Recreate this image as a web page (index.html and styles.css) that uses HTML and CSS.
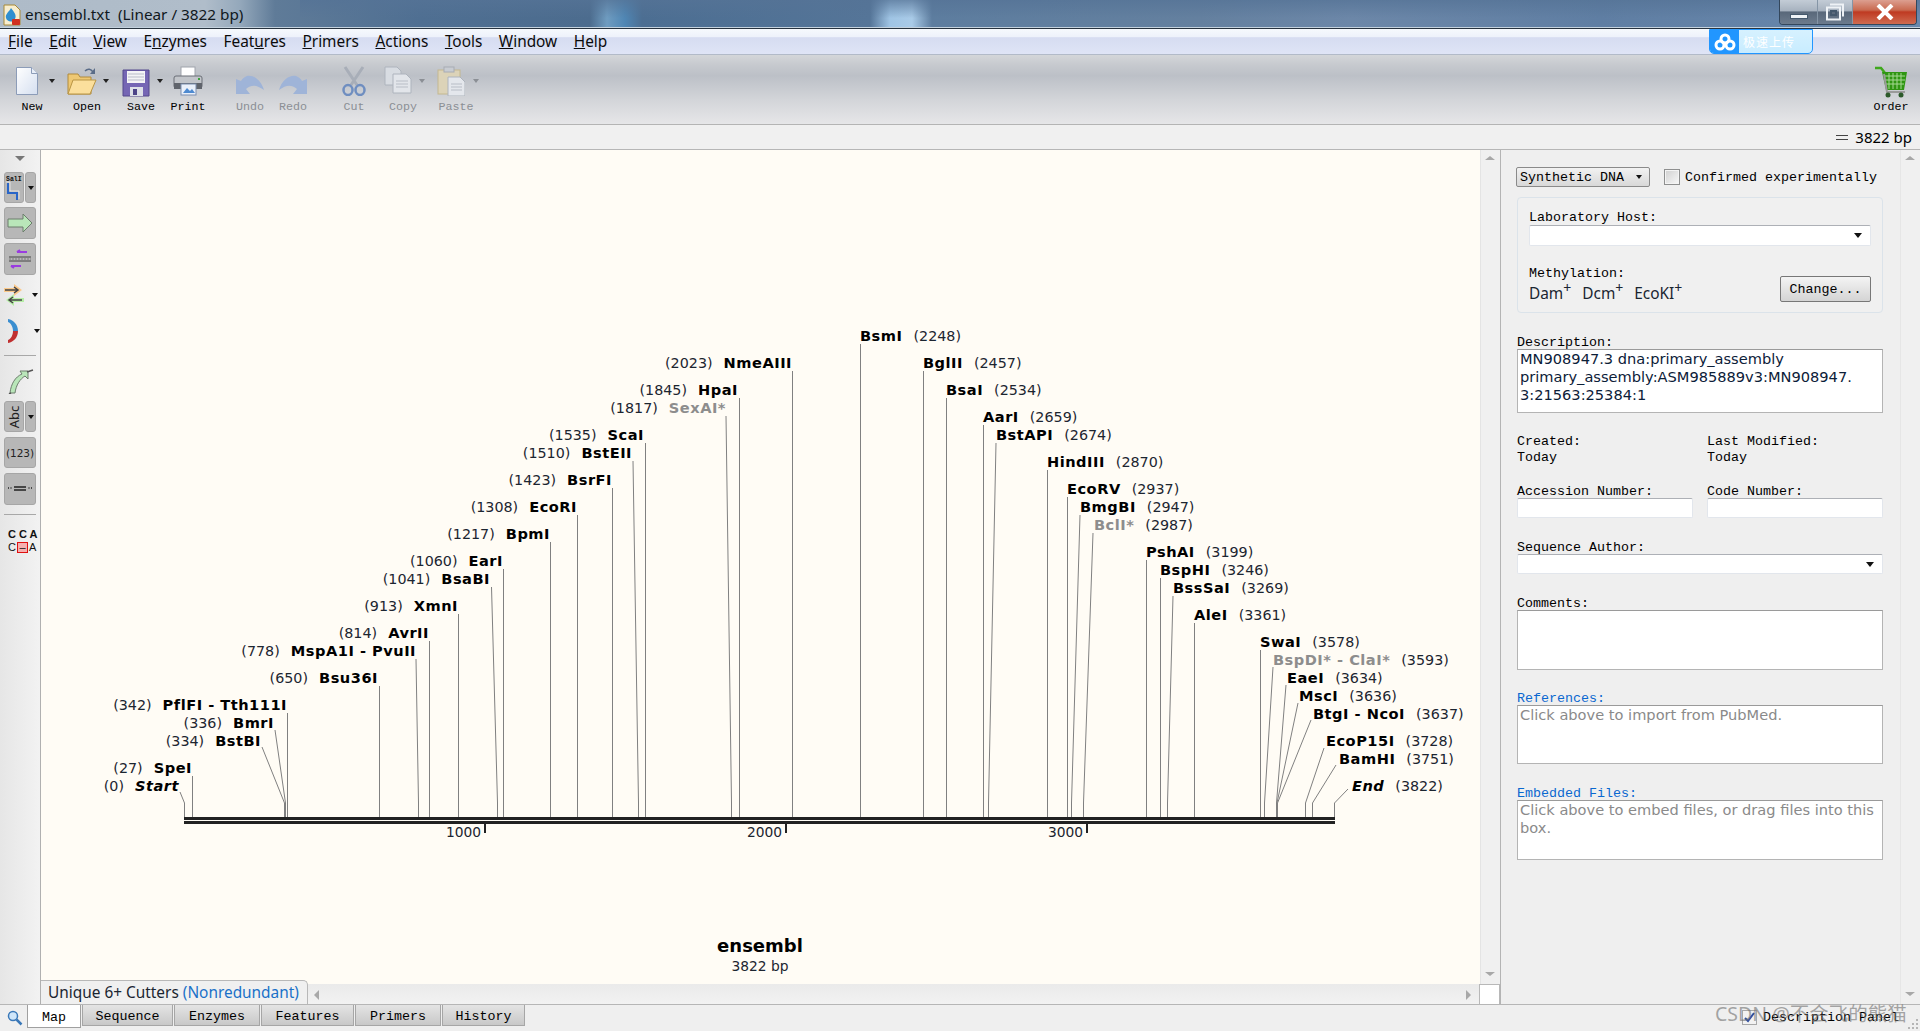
FILE: index.html
```html
<!DOCTYPE html>
<html lang="en">
<head>
<meta charset="utf-8">
<title>ensembl.txt</title>
<link rel="stylesheet" href="styles.css">
</head>
<body>
<div class="app">
  <header class="titlebar">
    <svg class="appicon" width="18" height="22" viewBox="0 0 18 22"><path d="M1 1h11l5 5v15H1z" fill="#f8eecf" stroke="#a88a38"/><path d="M8 4c3 4 6 7 4 11s-8 3-9-1 3-6 5-10z" fill="#2f8fd0"/><rect x="9" y="15" width="8" height="6" rx="1" fill="#d03020"/></svg>
    <span class="titletext">ensembl.txt&nbsp; (Linear / 3822 bp)</span>
    <div class="winbtns">
      <div class="winbtn winmin"><span class="minbar"></span></div>
      <div class="winbtn winmax"><svg width="20" height="18" viewBox="0 0 20 18"><path d="M5 1.500h13v12M2 4.500h13v12H2z" fill="none" stroke="#eef2f6" stroke-width="2"/><rect x="6" y="8" width="5" height="4" fill="none" stroke="#44586c" stroke-width="2"/></svg></div>
      <div class="winbtn winclose"><svg width="20" height="16" viewBox="0 0 20 16"><path d="M3 1l14 14M17 1L3 15" stroke="#fff" stroke-width="4"/></svg></div>
    </div>
  </header>

  <nav class="menubar">
    <span class="mi"><u>F</u>ile</span><span class="mi"><u>E</u>dit</span><span class="mi"><u>V</u>iew</span><span class="mi">E<u>n</u>zymes</span><span class="mi">Feat<u>u</u>res</span><span class="mi"><u>P</u>rimers</span><span class="mi"><u>A</u>ctions</span><span class="mi"><u>T</u>ools</span><span class="mi"><u>W</u>indow</span><span class="mi"><u>H</u>elp</span>
    <div class="cloudwidget">
      <span class="cloudicon"><svg width="22" height="18" viewBox="0 0 22 18"><g fill="none" stroke="#fff" stroke-width="3"><circle cx="11" cy="6" r="4"/><circle cx="6" cy="12" r="4"/><circle cx="16" cy="12" r="4"/></g></svg></span>
      <span class="cloudtext">极速上传</span>
    </div>
  </nav>

  <div class="toolbar">
    <div class="tool t48 car"><svg width="24" height="30" viewBox="0 0 24 30"><defs><linearGradient id="pg" x1="0" y1="0" x2="1" y2="1"><stop offset="0" stop-color="#fff"/><stop offset="1" stop-color="#d5dff0"/></linearGradient></defs><path d="M1.500 1.500h15l6 6v21h-21z" fill="url(#pg)" stroke="#8c9cb8"/><path d="M16.500 1.500v6h6" fill="#e8eef8" stroke="#8c9cb8"/></svg><span>New</span><i class="caret"></i></div>
    <div class="tool t46 ml8 car"><svg width="30" height="30" viewBox="0 0 30 30"><path d="M1 8h10l2 3h11v17H1z" fill="#eec873" stroke="#b08a3c"/><path d="M6 14h23l-6 14H1z" fill="#fbdf9c" stroke="#b99544"/><path d="M18 5c3-3 6-2 8 1" fill="none" stroke="#5a6c88" stroke-width="1.500"/><path d="M28 2v6h-5z" fill="#5a6c88"/></svg><span>Open</span><i class="caret"></i></div>
    <div class="tool t46 ml8 car"><svg class="i14" width="28" height="28" viewBox="0 0 28 28"><path d="M1 1h26v26H1z" fill="#7566b4" stroke="#54488c"/><rect x="5" y="2" width="18" height="12" fill="#f4f4f6"/><path d="M6 5h16M6 8h16M6 11h16" stroke="#b9bdc9"/><rect x="8" y="18" width="13" height="9" fill="#dde0e8"/><rect x="11" y="20" width="4" height="6" fill="#4c4488"/></svg><span>Save</span><i class="caret"></i></div>
    <div class="tool t48"><svg width="30" height="30" viewBox="0 0 30 30"><rect x="8" y="1" width="14" height="10" fill="#fff" stroke="#a0a4ac"/><rect x="1" y="10" width="28" height="12" rx="2" fill="#c2c5ca" stroke="#6a6e76"/><rect x="1" y="17" width="28" height="6" fill="#60646c"/><rect x="8" y="18" width="15" height="11" fill="#eaf0fa" stroke="#7c8fb0"/><path d="M10 27l4-5 3 3 2-2 3 4z" fill="#4e8ad0"/><rect x="25" y="12" width="2" height="2" fill="#3fa040"/></svg><span>Print</span></div>
    <div class="tool t42 ml17 off"><svg class="i18" width="30" height="22" viewBox="0 0 30 22"><path d="M1 6v15h14l-4-5c6-5 11-4 18 1C26 7 19 2 12 3 9 4 7 6 6 8z" fill="#9fb4d8"/></svg><span>Undo</span></div>
    <div class="tool t42 ml1 off"><svg class="i18" width="30" height="22" viewBox="0 0 30 22"><path d="M29 6v15H15l4-5C13 11 8 12 1 17 4 7 11 2 18 3c3 1 5 3 6 5z" fill="#9fb4d8"/></svg><span>Redo</span></div>
    <div class="tool t42 ml19 off"><svg width="24" height="30" viewBox="0 0 24 30"><path d="M3 1l12 18M21 1L9 19" stroke="#a8aeb8" stroke-width="3"/><g fill="none" stroke="#6f8ec0" stroke-width="2.500"><ellipse cx="6" cy="24" rx="4.500" ry="5"/><ellipse cx="18" cy="24" rx="4.500" ry="5"/></g></svg><span>Cut</span></div>
    <div class="tool t46 ml5 off car"><svg width="28" height="28" viewBox="0 0 28 28"><path d="M1 1h12l4 4v14H1z" fill="#d8dce2" stroke="#aeb4bd"/><path d="M9 8h13l5 5v14H9z" fill="#e2e5ea" stroke="#aeb4bd"/><path d="M12 15h12M12 18h12M12 21h12" stroke="#b8bdc6"/></svg><span>Copy</span><i class="caret grey"></i></div>
    <div class="tool t48 ml6 off car"><svg width="28" height="30" viewBox="0 0 28 30"><rect x="1" y="4" width="22" height="24" fill="#dcd3b8" stroke="#c4b890"/><rect x="7" y="1" width="10" height="5" fill="#c8ccd2" stroke="#a8acb4"/><path d="M11 11h12l5 5v14H11z" fill="#e4e7ec" stroke="#aeb4bd"/><path d="M14 18h11M14 21h11M14 24h11" stroke="#b8bdc6"/></svg><span>Paste</span><i class="caret grey"></i></div>
    <div class="tool t42 right"><svg width="34" height="32" viewBox="0 0 34 32"><path d="M1 2h6l4 5" fill="none" stroke="#3fa81c" stroke-width="2.500"/><path d="M8 6h25l-3 18H12z" fill="#2f9612"/><path d="M11 10h20M11 14h20M12 18h18M15 7v16M19 7v16M23 7v16M27 7v16" stroke="#a7d894"/><path d="M10 8l3 18h18" fill="none" stroke="#9a9a9a" stroke-width="2"/><circle cx="14" cy="29" r="2.500" fill="#2c5a2a"/><circle cx="27" cy="29" r="2.500" fill="#2c5a2a"/></svg><span>Order</span></div>
  </div>

  <div class="statusrow"><span class="eqicon"></span><span>3822 bp</span></div>

  <main class="main">
    <aside class="leftbar">
      <i class="lefttri"></i>
      <div class="lrow lr1">
        <div class="lbtn lw20 lh31"><svg width="18" height="27" viewBox="0 0 18 27"><text x="1" y="7" class="salt">SalI</text><path d="M3 9v10h9v7" fill="none" stroke="#2a66c8" stroke-width="2"/><path d="M1 8h4v9h9v8" fill="none" stroke="#fff" stroke-width=".6"/></svg></div>
        <div class="lbtn lw11 lh31"><i class="mini"></i></div>
      </div>
      <div class="lbtn lw32 lh32 mt4"><svg width="26" height="20" viewBox="0 0 26 20"><path d="M1 6h15V1l9 9-9 9v-5H1z" fill="#b9e6b9" stroke="#6c7c6c"/></svg></div>
      <div class="lbtn lw32 lh32 mt4"><svg width="24" height="24" viewBox="0 0 24 24"><path d="M1 10h22M1 14h22" stroke="#444"/><path d="M1 12h22" stroke="#999" stroke-dasharray="2 1" stroke-width="2"/><path d="M9 5h10M9 5l3-2M3 19h10M3 19l3 2" stroke="#9a3ce0" stroke-width="2" fill="none"/></svg></div>
      <div class="lrow lr2"><svg width="20" height="23" viewBox="0 0 20 23"><path d="M0 5h10V1l8 6-8 6V9H0z" fill="#fbc98a"/><path d="M1 7h12M10 4l4 3-4 3" fill="none" stroke="#444" stroke-width="1.500"/><path d="M20 15H10v-4l-8 6 8 6v-4h10z" fill="#b6eea6"/><path d="M18 17H6M9 14l-4 3 4 3" fill="none" stroke="#444" stroke-width="1.500"/></svg><i class="mini"></i></div>
      <div class="lrow lr3"><svg width="20" height="24" viewBox="0 0 20 24"><path d="M2 0c6 1 10 6 10 12H7C7 8 5 4 2 3z" fill="#3a8ed0"/><path d="M12 12c0 6-4 11-10 12v-3c3-1 5-5 5-9z" fill="#c03030"/></svg><i class="mini"></i></div>
      <hr class="lsep mt12">
      <svg class="featarrow" width="26" height="25" viewBox="0 0 26 25"><path d="M2 24C3 15 7 8 14 5l-2-3 8 0 0 8-3-3C12 10 8 16 7 24z" fill="#b9e6b9" stroke="#6c7c6c"/><path d="M19 3l6-2M1 25l2-1" stroke="#555" stroke-width="1.500"/></svg>
      <div class="lrow lr4">
        <div class="lbtn lw20 lh31"><span class="vtext">Abc</span></div>
        <div class="lbtn lw11 lh31"><i class="mini"></i></div>
      </div>
      <div class="lbtn lw32 lh31 mt5 num">(123)</div>
      <div class="lbtn lw32 lh32 mt5"><svg width="26" height="8" viewBox="0 0 26 8"><path d="M7 2h12M7 5h12M1 3h1M3.500 3h1M21.500 3h1M24 3h1" stroke="#222" stroke-width="1.500"/></svg></div>
      <hr class="lsep mt9">
      <div class="cca"><b>C C A</b><span class="cca2">C<em>–</em>A</span></div>
    </aside>

    <section class="mapwrap">
      <div class="mapcol">
        <div class="maprow">
          <div class="canvas">
            <svg class="mapsvg" width="1439" height="834" viewBox="41 150 1439 834">
              <g class="ln">
                <path d="M180 792L184.500 803V817"/>
                <path d="M192.500 776V817"/>
                <path d="M262 747L284.500 803V817"/>
                <path d="M275 730L285.500 803V817"/>
                <path d="M287.500 713V817"/>
                <path d="M379.500 686V817"/>
                <path d="M416 659L418.500 803V817"/>
                <path d="M429.500 641V817"/>
                <path d="M458.500 614V817"/>
                <path d="M491.500 587L497.500 803V817"/>
                <path d="M503.500 569V817"/>
                <path d="M550.500 542V817"/>
                <path d="M577.500 515V817"/>
                <path d="M612.500 488V817"/>
                <path d="M633 461L638.500 803V817"/>
                <path d="M645.500 443V817"/>
                <path d="M726 416L731.500 803V817"/>
                <path d="M739.500 398V817"/>
                <path d="M792.500 371V817"/>
                <path d="M860.500 344V817"/>
                <path d="M923.500 371V817"/>
                <path d="M946.500 398V817"/>
                <path d="M983.500 425V817"/>
                <path d="M996 443L988.500 803V817"/>
                <path d="M1047.500 470V817"/>
                <path d="M1067.500 497V817"/>
                <path d="M1080 515L1071.500 803V817"/>
                <path d="M1093 533L1083.500 803V817"/>
                <path d="M1146.500 560V817"/>
                <path d="M1160.500 578V817"/>
                <path d="M1173 596L1167.500 803V817"/>
                <path d="M1194.500 623V817"/>
                <path d="M1260.500 650V817"/>
                <path d="M1273 667L1264.500 803V817"/>
                <path d="M1286 685L1276.500 803V817"/>
                <path d="M1298 703L1277 803V817"/>
                <path d="M1311 720L1277.500 803V817"/>
                <path d="M1324 748L1305.500 803V817"/>
                <path d="M1336 765L1312.500 803V817"/>
                <path d="M1348 789L1334.500 803V817"/>
              </g>
              <rect class="bb" x="184" y="817" width="1151" height="3"/>
              <rect class="bb" x="184" y="821" width="1151" height="3"/>
              <rect class="bb" x="484" y="824" width="2" height="9"/>
              <rect class="bb" x="785" y="824" width="2" height="9"/>
              <rect class="bb" x="1086" y="824" width="2" height="9"/>
              <text class="num tick" x="481" y="837" text-anchor="end">1000</text>
              <text class="num tick" x="782" y="837" text-anchor="end">2000</text>
              <text class="num tick" x="1083" y="837" text-anchor="end">3000</text>

              <text class="num" x="179" y="791" text-anchor="end">(0)<tspan class="it" dx="11">Start</tspan></text>
              <text class="num" x="192" y="773" text-anchor="end">(27)<tspan class="nm" dx="11">SpeI</tspan></text>
              <text class="num" x="261" y="746" text-anchor="end">(334)<tspan class="nm" dx="11">BstBI</tspan></text>
              <text class="num" x="274" y="728" text-anchor="end">(336)<tspan class="nm" dx="11">BmrI</tspan></text>
              <text class="num" x="287" y="710" text-anchor="end">(342)<tspan class="nm" dx="11">PflFI - Tth111I</tspan></text>
              <text class="num" x="378" y="683" text-anchor="end">(650)<tspan class="nm" dx="11">Bsu36I</tspan></text>
              <text class="num" x="416" y="656" text-anchor="end">(778)<tspan class="nm" dx="11">MspA1I - PvuII</tspan></text>
              <text class="num" x="429" y="638" text-anchor="end">(814)<tspan class="nm" dx="11">AvrII</tspan></text>
              <text class="num" x="458" y="611" text-anchor="end">(913)<tspan class="nm" dx="11">XmnI</tspan></text>
              <text class="num" x="490" y="584" text-anchor="end">(1041)<tspan class="nm" dx="11">BsaBI</tspan></text>
              <text class="num" x="503" y="566" text-anchor="end">(1060)<tspan class="nm" dx="11">EarI</tspan></text>
              <text class="num" x="550" y="539" text-anchor="end">(1217)<tspan class="nm" dx="11">BpmI</tspan></text>
              <text class="num" x="577" y="512" text-anchor="end">(1308)<tspan class="nm" dx="11">EcoRI</tspan></text>
              <text class="num" x="612" y="485" text-anchor="end">(1423)<tspan class="nm" dx="11">BsrFI</tspan></text>
              <text class="num" x="632" y="458" text-anchor="end">(1510)<tspan class="nm" dx="11">BstEII</tspan></text>
              <text class="num" x="644" y="440" text-anchor="end">(1535)<tspan class="nm" dx="11">ScaI</tspan></text>
              <text class="num" x="726" y="413" text-anchor="end">(1817)<tspan class="nm dim" dx="11">SexAI*</tspan></text>
              <text class="num" x="738" y="395" text-anchor="end">(1845)<tspan class="nm" dx="11">HpaI</tspan></text>
              <text class="num" x="792" y="368" text-anchor="end">(2023)<tspan class="nm" dx="11">NmeAIII</tspan></text>

              <text class="num" x="860" y="341"><tspan class="nm">BsmI</tspan><tspan dx="11">(2248)</tspan></text>
              <text class="num" x="923" y="368"><tspan class="nm">BglII</tspan><tspan dx="11">(2457)</tspan></text>
              <text class="num" x="946" y="395"><tspan class="nm">BsaI</tspan><tspan dx="11">(2534)</tspan></text>
              <text class="num" x="983" y="422"><tspan class="nm">AarI</tspan><tspan dx="11">(2659)</tspan></text>
              <text class="num" x="996" y="440"><tspan class="nm">BstAPI</tspan><tspan dx="11">(2674)</tspan></text>
              <text class="num" x="1047" y="467"><tspan class="nm">HindIII</tspan><tspan dx="11">(2870)</tspan></text>
              <text class="num" x="1067" y="494"><tspan class="nm">EcoRV</tspan><tspan dx="11">(2937)</tspan></text>
              <text class="num" x="1080" y="512"><tspan class="nm">BmgBI</tspan><tspan dx="11">(2947)</tspan></text>
              <text class="num" x="1094" y="530"><tspan class="nm dim">BclI*</tspan><tspan dx="11">(2987)</tspan></text>
              <text class="num" x="1146" y="557"><tspan class="nm">PshAI</tspan><tspan dx="11">(3199)</tspan></text>
              <text class="num" x="1160" y="575"><tspan class="nm">BspHI</tspan><tspan dx="11">(3246)</tspan></text>
              <text class="num" x="1173" y="593"><tspan class="nm">BssSaI</tspan><tspan dx="11">(3269)</tspan></text>
              <text class="num" x="1194" y="620"><tspan class="nm">AleI</tspan><tspan dx="11">(3361)</tspan></text>
              <text class="num" x="1260" y="647"><tspan class="nm">SwaI</tspan><tspan dx="11">(3578)</tspan></text>
              <text class="num" x="1273" y="665"><tspan class="nm dim">BspDI* - ClaI*</tspan><tspan dx="11">(3593)</tspan></text>
              <text class="num" x="1287" y="683"><tspan class="nm">EaeI</tspan><tspan dx="11">(3634)</tspan></text>
              <text class="num" x="1299" y="701"><tspan class="nm">MscI</tspan><tspan dx="11">(3636)</tspan></text>
              <text class="num" x="1313" y="719"><tspan class="nm">BtgI - NcoI</tspan><tspan dx="11">(3637)</tspan></text>
              <text class="num" x="1326" y="746"><tspan class="nm">EcoP15I</tspan><tspan dx="11">(3728)</tspan></text>
              <text class="num" x="1339" y="764"><tspan class="nm">BamHI</tspan><tspan dx="11">(3751)</tspan></text>
              <text class="num" x="1352" y="791"><tspan class="it">End</tspan><tspan dx="11">(3822)</tspan></text>

              <text class="ttl" x="760" y="952" text-anchor="middle">ensembl</text>
              <text class="num tick" x="760" y="971" text-anchor="middle">3822 bp</text>
            </svg>
          </div>
          <div class="vscroll"><i class="au"></i><i class="ad"></i></div>
        </div>
        <div class="hrow">
          <div class="enztab">Unique 6+ Cutters <span class="blue">(Nonredundant)</span></div>
          <div class="htrack"><i class="al"></i><i class="ar"></i></div>
          <div class="corner"></div>
        </div>
      </div>
    </section>

    <aside class="panel">
      <div class="panelbody">
        <div class="typerow">
          <div class="selectbtn"><span>Synthetic DNA</span><i class="mini"></i></div>
          <span class="check"></span>
          <span class="mono">Confirmed experimentally</span>
        </div>
        <div class="group">
          <div class="lab mono">Laboratory Host:</div>
          <div class="combo"><i class="mini"></i></div>
          <div class="methrow">
            <div>
              <div class="lab mono">Methylation:</div>
              <div class="meth">Dam<sup>+</sup><span class="mg">Dcm<sup>+</sup></span><span class="mg">EcoKI<sup>+</sup></span></div>
            </div>
            <div class="changebtn mono">Change...</div>
          </div>
        </div>
        <div class="lab mono mt22">Description:</div>
        <div class="area h64">MN908947.3 dna:primary_assembly<br>primary_assembly:ASM985889v3:MN908947.<br>3:21563:25384:1</div>
        <div class="two mt21">
          <div class="mono lab2">Created:<br>Today</div>
          <div class="mono lab2">Last Modified:<br>Today</div>
        </div>
        <div class="two mt18">
          <div><div class="lab mono">Accession Number:</div><div class="input"></div></div>
          <div><div class="lab mono">Code Number:</div><div class="input"></div></div>
        </div>
        <div class="lab mono mt22">Sequence Author:</div>
        <div class="combo full"><i class="mini"></i></div>
        <div class="lab mono mt22">Comments:</div>
        <div class="area h60"></div>
        <div class="lab mono link mt21">References:</div>
        <div class="area h59 ph">Click above to import from PubMed.</div>
        <div class="lab mono link mt22">Embedded Files:</div>
        <div class="area h60 ph">Click above to embed files, or drag files into this box.</div>
      </div>
      <div class="vscroll pscroll"><i class="au"></i><i class="ad"></i></div>
    </aside>
  </main>

  <footer class="tabbar">
    <svg class="mag" width="16" height="16" viewBox="0 0 16 16"><circle cx="6" cy="6" r="4.500" fill="#cfe6fa" stroke="#3a78b8" stroke-width="1.500"/><path d="M9.500 9.500l5 5" stroke="#3a78b8" stroke-width="2.500"/></svg>
    <div class="tab active">Map</div>
    <div class="tab w91">Sequence</div>
    <div class="tab w86">Enzymes</div>
    <div class="tab w93">Features</div>
    <div class="tab w86">Primers</div>
    <div class="tab w83">History</div>
    <div class="descpanel">
      <svg width="15" height="15" viewBox="0 0 15 15"><rect x=".5" y=".5" width="14" height="14" fill="#f2f2f2" stroke="#a8a8a8"/><path d="M3 8l3 3 6-8" fill="none" stroke="#2f4f9f" stroke-width="2"/></svg>
      <span class="mono">Description Panel</span>
    </div>
    <div class="watermark">CSDN @不会飞的熊猫</div>
    <svg class="grip" width="12" height="12" viewBox="0 0 12 12"><path d="M9 1h2v2H9zM5 5h2v2H5zM9 5h2v2H9zM1 9h2v2H1zM5 9h2v2H5zM9 9h2v2H9z" fill="#b5b5b5"/></svg>
  </footer>
</div>
</body>
</html>
```

FILE: styles.css
```css
* { box-sizing: border-box; }
html, body { margin: 0; padding: 0; }
body { width: 1920px; height: 1031px; overflow: hidden; font-family: "Noto Sans", sans-serif; color: #000; background: #f0f0f0; }
.app { width: 1920px; height: 1031px; display: flex; flex-direction: column; }
.mono { font-family: "Liberation Mono", monospace; font-size: 13.33px; }

/* title bar */
.titlebar { height: 29px; flex: none; display: flex; align-items: flex-start; padding-left: 3px; position: relative; border-bottom: 1px solid #27333f; box-shadow: inset 0 -1px 0 #c4d2de;
  background-image: linear-gradient(180deg, rgba(85,115,150,.75), rgba(85,115,150,0) 65%), linear-gradient(90deg, #aebbc8 0, #b0bdca 205px, #94a8bb 240px, #5f7b98 275px, #4f6f92 420px, #4c6c8e 590px, #6f9cc0 607px, #4f86b4 625px, #4c6e92 642px, #557598 870px, #9fc4e4 890px, #a9cbe8 912px, #5d7d9f 932px, #64809f 1200px, #6c87a8 1350px, #5f7ea3 1600px, #6a89ad 1920px);
  background-size: 1620px 100%, 100% 100%; background-position: 300px 0, 0 0; background-repeat: no-repeat; }
.appicon { margin-top: 4px; flex: none; }
.titletext { font-size: 15.3px; line-height: 28px; margin-left: 4px; color: #101820; }
.winbtns { margin-left: auto; margin-right: 3px; display: flex; height: 25px; border: 1px solid #33475c; border-top: 0; border-radius: 0 0 4px 4px; overflow: hidden; }
.winbtn { display: flex; align-items: center; justify-content: center; border-right: 1px solid #8595a6; }
.winmin { width: 38px; background: linear-gradient(#c3ccd6 0, #a7b2bf 45%, #59687a 50%, #6c7b8d 100%); }
.winmax { width: 35px; background: linear-gradient(#c3ccd6 0, #a7b2bf 45%, #59687a 50%, #6c7b8d 100%); }
.winclose { width: 63px; border-right: 0; background: linear-gradient(#dc9f90 0, #c96a50 42%, #bf3a22 50%, #cf6b50 100%); }
.minbar { width: 18px; height: 5px; background: #eef2f6; margin-top: 8px; border: 1px solid #44586c; }

/* menu */
.menubar { height: 26px; flex: none; display: flex; align-items: center; padding: 1px 0 0 8px; font-size: 15.4px; border-bottom: 1px solid #b2bac8; background: linear-gradient(#f6f9fd 0, #eef2fb 30%, #d6dcf1 35%, #dfe4f6 100%); position: relative; }
.mi { margin-right: 16.5px; line-height: 24px; color: #0b0b0b; }
.cloudwidget { position: absolute; left: 1709px; top: 0; width: 104px; height: 25px; display: flex; border: 1px solid #2196ff; border-radius: 0 0 5px 5px; overflow: hidden; background: linear-gradient(#d6f1ff, #c8ecff); }
.cloudicon { width: 29px; background: #2196ff; display: flex; align-items: center; justify-content: center; }
.cloudtext { margin-left: 4px; color: #fff; font: 12px/23px "Noto Sans CJK SC", sans-serif; letter-spacing: 1px; }

/* toolbar */
.toolbar { height: 70px; flex: none; display: flex; padding: 0 8px; border-bottom: 1px solid #b4b4b4; background: linear-gradient(#d4d6d9 0, #c6c9ce 15%, #bcc0c7 30%, #d3d5d9 65%, #e6e6e8 100%); }
.tool { position: relative; height: 100%; display: flex; flex-direction: column; align-items: center; font-family: "Liberation Mono", monospace; font-size: 11.67px; }
.tool svg { margin-top: 11px; flex: none; }
.tool svg.i14 { margin-top: 14px; }
.tool svg.i18 { margin-top: 18px; }
.tool.car svg { margin-right: 11px; }
.tool span { position: absolute; top: 45px; line-height: 14px; }
.off span { color: #8b8f95; }
.t48 { width: 48px; } .t46 { width: 46px; } .t42 { width: 42px; }
.ml1 { margin-left: 1px; } .ml5 { margin-left: 5px; } .ml6 { margin-left: 6px; } .ml8 { margin-left: 8px; } .ml17 { margin-left: 17px; } .ml19 { margin-left: 19px; }
.right { margin-left: auto; }
.caret { position: absolute; right: 1px; top: 24px; border: 3px solid transparent; border-top: 4px solid #222; border-bottom: 0; }
.caret.grey { border-top-color: #8b8f95; }

.statusrow { height: 25px; flex: none; display: flex; align-items: center; justify-content: flex-end; padding-right: 8px; font-size: 15px; border-bottom: 1px solid #b6b6b6; background: #f0f0f0; }
.eqicon { width: 12px; height: 5px; border-top: 1.500px solid #444; border-bottom: 1.500px solid #444; margin-right: 7px; }

/* main */
.main { flex: 1; min-height: 0; display: flex; }
.leftbar { width: 41px; flex: none; border-right: 1px solid #b0b0b0; padding-left: 4px; display: flex; flex-direction: column; align-items: flex-start; background: linear-gradient(90deg, #e6e6e6, #f2f2f2); }
.lefttri { margin: 6px 0 0 11px; border: 5px solid transparent; border-top: 5px solid #777; border-bottom: 0; flex: none; }
.lrow { display: flex; gap: 1px; align-items: center; flex: none; }
.lr1 { margin-top: 11px; }
.lr2 { margin-top: 8px; height: 23px; gap: 8px; }
.lr3 { margin-top: 13px; height: 24px; gap: 8px; padding-left: 2px; }
.lr4 { margin-top: 7px; }
.lbtn { flex: none; display: flex; align-items: center; justify-content: center; background: #b7b7b7; border: 1px solid #a6a6a6; border-radius: 3px; }
.lw20 { width: 20px; } .lw11 { width: 11px; } .lw32 { width: 32px; }
.lh31 { height: 31px; } .lh32 { height: 32px; }
.mt4 { margin-top: 4px; } .mt5 { margin-top: 5px; } .mt9 { margin-top: 9px; } .mt12 { margin-top: 12px; }
.mini { display: block; flex: none; border: 3px solid transparent; border-top: 4px solid #111; border-bottom: 0; }
.lsep { width: 32px; height: 0; border: 0; border-top: 1px solid #a8a8a8; margin-bottom: 0; margin-left: 0; margin-right: 0; flex: none; }
.featarrow { margin: 13px 0 0 4px; flex: none; }
.salt { font: bold 6.500px "Liberation Mono", monospace; fill: #111; }
.vtext { font: 13px "Noto Sans", sans-serif; color: #222; transform: rotate(-90deg); }
.num { font-family: "DejaVu Sans", sans-serif; font-size: 10.5px; color: #222; }
.cca { margin: 13px 0 0 4px; font: 11px/13px "Liberation Sans", sans-serif; width: 28px; color: #111; }
.cca b { display: block; white-space: nowrap; }
.cca2 { display: block; white-space: nowrap; }
.cca2 em { display: inline-block; width: 11px; height: 11px; line-height: 9px; margin: 0 1px; background: #f5b0b0; border: 1px solid #e01010; text-align: center; font-style: normal; }

.mapwrap { width: 1460px; flex: none; border-right: 1px solid #b4b4b4; }
.mapcol { height: 100%; display: flex; flex-direction: column; }
.maprow { height: 834px; flex: none; display: flex; }
.canvas { width: 1439px; background: #fffcf5; position: relative; overflow: hidden; }
.mapsvg { display: block; }
.ln path { fill: none; stroke: #808080; stroke-width: 1; }
.bb { fill: #222; }
.mapsvg .num { font-family: "DejaVu Sans", sans-serif; font-size: 14.3px; fill: #1c2530; }
.mapsvg .tick { font-size: 13.8px; }
.mapsvg .nm { font-weight: bold; fill: #000; font-size: 14.600px; letter-spacing: .5px; }
.mapsvg .it { font-weight: bold; font-style: italic; fill: #000; font-size: 14.600px; letter-spacing: .5px; }
.mapsvg .dim { fill: #8d8d8d; }
.ttl { font-family: "DejaVu Sans", sans-serif; font-weight: bold; font-size: 18px; fill: #000; }

.vscroll { width: 20px; flex: none; background: #f0f0f0; position: relative; border-left: 1px solid #e4e4e4; }
.au, .ad, .al, .ar { position: absolute; border: 5px solid transparent; }
.au { top: 6px; left: 4px; border-bottom: 4px solid #a8a8a8; border-top: 0; }
.ad { bottom: 8px; left: 4px; border-top: 4px solid #a8a8a8; border-bottom: 0; }
.al { left: 6px; top: 6px; border-right: 5px solid #a8a8a8; border-left: 0; }
.ar { right: 8px; top: 6px; border-left: 5px solid #a8a8a8; border-right: 0; }

.hrow { height: 20px; flex: none; display: flex; position: relative; background: #f0f0f0; }
.enztab { position: absolute; left: 0; top: -4px; width: 267px; height: 24px; padding-left: 7px; font-size: 15.4px; line-height: 24px; background: #f0f0f0; border: 1px solid #b8b8b8; border-left: 0; border-bottom: 0; border-radius: 0 5px 0 0; white-space: nowrap; color: #1a2530; }
.blue { color: #1a70c8; }
.htrack { margin-left: 267px; flex: 1; position: relative; background: linear-gradient(#eaeaea, #f2f2f2); }
.corner { width: 21px; background: #fff; border: 1px solid #b8b8b8; border-bottom: 0; flex: none; }

/* panel */
.panel { flex: 1; min-width: 0; display: flex; background: #efefef; }
.panelbody { width: 399px; flex: none; padding: 17px 17px 0 16px; }
.pscroll { border-left: 1px solid #e6e6e6; }
.typerow { display: flex; align-items: center; height: 20px; margin-left: -1px; }
.selectbtn { width: 134px; height: 20px; display: flex; align-items: center; justify-content: space-between; padding: 0 7px 0 3px; font-family: "Liberation Mono", monospace; font-size: 13.33px; border: 1px solid #8a8a8a; border-radius: 2px; background: linear-gradient(#f2f2f2, #d8d8d8); }
.check { width: 16px; height: 16px; margin: 0 5px 0 14px; border: 1px solid #8e8f8f; background: linear-gradient(135deg, #d0d0d0, #f8f8f8); box-shadow: inset 0 0 0 1px #f4f4f4; }
.group { height: 116px; margin-top: 10px; padding: 13px 11px 0; border: 1px solid #dbe3ea; border-radius: 4px; background: #f0f0f0; }
.lab { height: 14px; line-height: 15px; white-space: nowrap; }
.group .lab { line-height: 13px; }
.combo { height: 21px; background: #fff; border: 1px solid #e2e6ec; border-top-color: #adb0b6; border-radius: 2px; display: flex; align-items: center; justify-content: flex-end; padding-right: 8px; }
.combo .mini { border-width: 4px; border-top-width: 5px; border-bottom-width: 0; }
.combo.full { height: 20px; }
.methrow { display: flex; justify-content: space-between; margin-top: 21px; }
.meth { font-size: 15.4px; line-height: 18px; margin-top: 4px; color: #1a2530; white-space: nowrap; }
.meth sup { font-size: 14px; line-height: 0; }
.mg { margin-left: 11px; }
.changebtn { width: 91px; height: 26px; margin-top: 9px; border: 1px solid #777; border-radius: 2px; background: linear-gradient(#f4f4f4, #d4d4d4); text-align: center; line-height: 25px; }
.mt18 { margin-top: 18px; } .mt21 { margin-top: 21px; } .mt22 { margin-top: 22px; }
.area { background: #fff; border: 1px solid #b4b4b4; border-top-color: #9a9a9a; padding: 0 2px; font-family: "DejaVu Sans", sans-serif; font-size: 14.6px; line-height: 18px; color: #0c2038; white-space: nowrap; }
.area.ph { white-space: normal; }
.h64 { height: 64px; } .h60 { height: 60px; } .h59 { height: 59px; }
.ph { color: #8a8a8a; }
.two { display: grid; grid-template-columns: 176px 176px; column-gap: 14px; }
.lab2 { line-height: 16px; }
.input { height: 20px; background: #fff; border: 1px solid #e2e6ec; border-top-color: #adb0b6; border-radius: 2px; }
.link { color: #0a68d0; }

/* tabs */
.tabbar { height: 27px; flex: none; display: flex; align-items: flex-start; gap: 1px; border-top: 1px solid #b6b6b6; padding-left: 7px; font-family: "Liberation Mono", monospace; font-size: 13.33px; position: relative; background: #efefef; }
.mag { margin: 5px 3px 0 0; flex: none; }
.tab { height: 21px; line-height: 23px; text-align: center; border: 1px solid #a6a6a6; border-top: 0; background: linear-gradient(#e4e4e4, #c8c8c8); flex: none; }
.tab.active { width: 54px; height: 23px; background: #fff; border-color: #a0a0a0; line-height: 25px; }
.w91 { width: 91px; } .w86 { width: 86px; } .w93 { width: 93px; } .w83 { width: 83px; }
.descpanel { position: absolute; left: 1742px; top: 5px; display: flex; align-items: center; gap: 6px; white-space: nowrap; }
.watermark { position: absolute; left: 1715px; top: -6px; font: 19.5px/30px "Noto Sans", "Noto Sans CJK SC", sans-serif; color: rgba(110,110,110,.6); white-space: nowrap; }
.grip { position: absolute; right: 1px; bottom: 1px; }
```
